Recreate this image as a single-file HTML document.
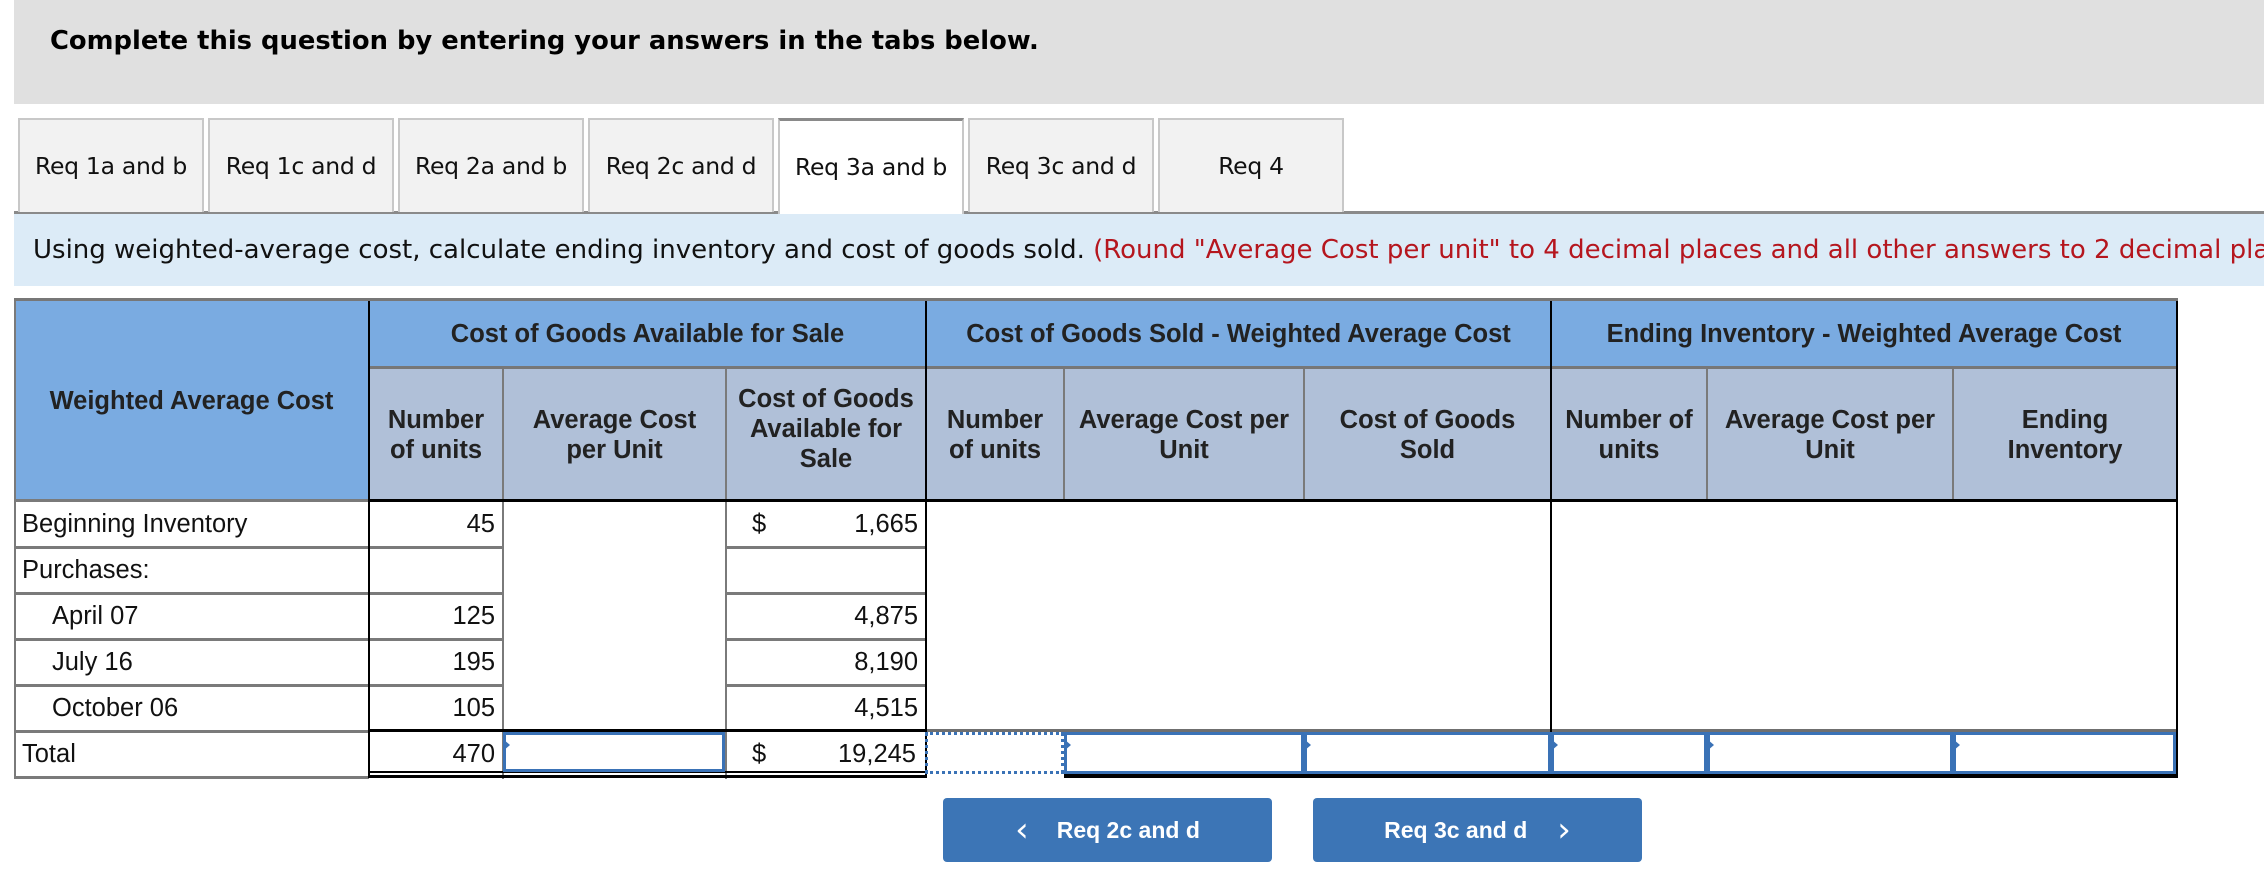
<!DOCTYPE html>
<html><head><meta charset="utf-8"><style>
*{margin:0;padding:0;box-sizing:border-box}
body{width:2264px;height:878px;background:#fff;position:relative;overflow:hidden;font-family:"Liberation Sans",Arial,sans-serif;color:#222}
.a{position:absolute}
.tab{position:absolute;top:118px;height:94px;width:186px;background:#f2f2f2;border:2px solid #c8c8c8;border-bottom:none;font-family:"DejaVu Sans",Verdana,sans-serif;font-size:23.5px;color:#111;display:flex;align-items:center;justify-content:center;white-space:nowrap;letter-spacing:-0.3px}
.hd{position:absolute;background:#b0c0d8;font-weight:bold;font-size:25.5px;color:#222;display:flex;align-items:center;justify-content:center;text-align:center;line-height:30px;white-space:nowrap}
.h1{position:absolute;background:#7aabe1;font-weight:bold;font-size:25.5px;color:#222;display:flex;align-items:center;justify-content:center;text-align:center;white-space:nowrap}
.vl{position:absolute;width:2px;background:#7a7a7a}
.vb{position:absolute;width:2px;background:#000}
.hl{position:absolute;height:3px;background:#7a7a7a}
.t{position:absolute;font-size:25.5px;line-height:46px;color:#111;white-space:nowrap}
.r{text-align:right}
.inp{position:absolute;border:3px solid #3a72b6;background:#fff}
.inp:before{content:"";position:absolute;left:-3px;top:4px;border-left:7px solid #3a72b6;border-top:6px solid transparent;border-bottom:6px solid transparent}
.btn{position:absolute;top:798px;height:64px;background:#3c75b6;border-radius:4px;color:#fff;font-weight:bold;font-size:23px;display:flex;align-items:center;justify-content:center}
.ch{font-weight:normal;font-size:34px;font-family:"DejaVu Sans",sans-serif;line-height:30px}
</style></head><body>
<div class="a" style="left:14px;top:0;width:2250px;height:104px;background:#e0e0e0"></div>
<div class="a" style="left:50px;top:26px;font-family:'DejaVu Sans',Verdana,sans-serif;font-weight:bold;font-size:25.8px;color:#000;white-space:nowrap">Complete this question by entering your answers in the tabs below.</div>

<div class="a" style="left:14px;top:211px;width:2250px;height:3px;background:#8a8a8a"></div>
<div class="tab" style="left:18px">Req 1a and b</div>
<div class="tab" style="left:208px">Req 1c and d</div>
<div class="tab" style="left:398px">Req 2a and b</div>
<div class="tab" style="left:588px">Req 2c and d</div>
<div class="tab" style="left:778px;background:#fff;border-top:3px solid #8a8a8a;height:97px;padding-bottom:3px">Req 3a and b</div>
<div class="tab" style="left:968px">Req 3c and d</div>
<div class="tab" style="left:1158px">Req 4</div>

<div class="a" style="left:14px;top:214px;width:2250px;height:72px;background:#dcebf7"></div>
<div class="a" style="left:33px;top:235px;font-family:'DejaVu Sans',Verdana,sans-serif;font-size:26px;white-space:nowrap;color:#111">Using weighted-average cost, calculate ending inventory and cost of goods sold. <span style="color:#b5161e">(Round "Average Cost per unit" to 4 decimal places and all other answers to 2 decimal places.)</span></div>

<!-- header -->
<div class="a" style="left:14px;top:298px;width:2164px;height:3px;background:#777"></div>
<div class="h1" style="left:14px;top:301px;width:355px;height:200px">Weighted Average Cost</div>
<div class="h1" style="left:369px;top:301px;width:557px;height:66px">Cost of Goods Available for Sale</div>
<div class="h1" style="left:926px;top:301px;width:625px;height:66px">Cost of Goods Sold - Weighted Average Cost</div>
<div class="h1" style="left:1551px;top:301px;width:626px;height:66px">Ending Inventory - Weighted Average Cost</div>
<div class="a" style="left:369px;top:366px;width:1808px;height:3px;background:#777"></div>
<div class="hd" style="left:369px;top:369px;width:134px;height:131px">Number<br>of units</div>
<div class="hd" style="left:503px;top:369px;width:223px;height:131px">Average Cost<br>per Unit</div>
<div class="hd" style="left:726px;top:369px;width:200px;height:131px;padding-bottom:12px">Cost of Goods<br>Available for<br>Sale</div>
<div class="hd" style="left:926px;top:369px;width:138px;height:131px">Number<br>of units</div>
<div class="hd" style="left:1064px;top:369px;width:240px;height:131px">Average Cost per<br>Unit</div>
<div class="hd" style="left:1304px;top:369px;width:247px;height:131px">Cost of Goods<br>Sold</div>
<div class="hd" style="left:1551px;top:369px;width:156px;height:131px">Number of<br>units</div>
<div class="hd" style="left:1707px;top:369px;width:246px;height:131px">Average Cost per<br>Unit</div>
<div class="hd" style="left:1953px;top:369px;width:224px;height:131px">Ending<br>Inventory</div>
<div class="vl" style="left:502px;top:369px;height:410px"></div>
<div class="vl" style="left:725px;top:369px;height:410px"></div>
<div class="vl" style="left:1063px;top:369px;height:132px"></div>
<div class="vl" style="left:1303px;top:369px;height:132px"></div>
<div class="vl" style="left:1706px;top:369px;height:132px"></div>
<div class="vl" style="left:1952px;top:369px;height:132px"></div>
<div class="a" style="left:369px;top:499px;width:1808px;height:3px;background:#000"></div>
<div class="a" style="left:14px;top:499px;width:355px;height:3px;background:#7a7a7a"></div>

<!-- body lines -->
<div class="vl" style="left:14px;top:301px;height:477px"></div>
<div class="hl" style="left:14px;top:546px;width:355px"></div>
<div class="hl" style="left:14px;top:592px;width:355px"></div>
<div class="hl" style="left:14px;top:638px;width:355px"></div>
<div class="hl" style="left:14px;top:684px;width:355px"></div>
<div class="hl" style="left:14px;top:730px;width:355px"></div>
<div class="hl" style="left:14px;top:776px;width:355px"></div>
<div class="hl" style="left:369px;top:546px;width:134px"></div>
<div class="hl" style="left:369px;top:592px;width:134px"></div>
<div class="hl" style="left:369px;top:638px;width:134px"></div>
<div class="hl" style="left:369px;top:684px;width:134px"></div>
<div class="hl" style="left:726px;top:546px;width:200px"></div>
<div class="hl" style="left:726px;top:592px;width:200px"></div>
<div class="hl" style="left:726px;top:638px;width:200px"></div>
<div class="hl" style="left:726px;top:684px;width:200px"></div>
<div class="a" style="left:369px;top:729px;width:1808px;height:3px;background:#000"></div>
<div class="a" style="left:926px;top:729px;width:1251px;height:3px;background:#6f6f6f"></div>
<div class="vb" style="left:368px;top:301px;height:477px"></div>
<div class="vb" style="left:925px;top:301px;height:477px;width:2px"></div>
<div class="vb" style="left:1550px;top:301px;height:477px"></div>
<div class="vb" style="left:2176px;top:301px;height:477px"></div>
<div class="a" style="left:369px;top:771px;width:557px;height:2px;background:#000"></div>
<div class="a" style="left:369px;top:775px;width:557px;height:3px;background:#000"></div>
<div class="a" style="left:1064px;top:774px;width:1113px;height:4px;background:#000"></div>

<div class="t" style="left:22px;top:501px">Beginning Inventory</div>
<div class="t" style="left:22px;top:547px">Purchases:</div>
<div class="t" style="left:52px;top:593px">April 07</div>
<div class="t" style="left:52px;top:639px">July 16</div>
<div class="t" style="left:52px;top:685px">October 06</div>
<div class="t" style="left:22px;top:731px">Total</div>
<div class="t r" style="left:369px;width:126px;top:501px">45</div>
<div class="t r" style="left:369px;width:126px;top:593px">125</div>
<div class="t r" style="left:369px;width:126px;top:639px">195</div>
<div class="t r" style="left:369px;width:126px;top:685px">105</div>
<div class="t r" style="left:369px;width:126px;top:731px">470</div>
<div class="t" style="left:752px;top:501px">$</div>
<div class="t" style="left:752px;top:731px">$</div>
<div class="t r" style="left:726px;width:192px;top:501px">1,665</div>
<div class="t r" style="left:726px;width:192px;top:593px">4,875</div>
<div class="t r" style="left:726px;width:192px;top:639px">8,190</div>
<div class="t r" style="left:726px;width:192px;top:685px">4,515</div>
<div class="t r" style="left:726px;width:190px;top:731px">19,245</div>

<div class="inp" style="left:503px;top:732px;width:222px;height:40px"></div>
<div class="a" style="left:925px;top:732px;width:139px;height:42px;border:3px dotted #3a72b6"></div>
<div class="inp" style="left:1064px;top:732px;width:240px;height:42px"></div>
<div class="inp" style="left:1304px;top:732px;width:247px;height:42px"></div>
<div class="inp" style="left:1551px;top:732px;width:156px;height:42px"></div>
<div class="inp" style="left:1707px;top:732px;width:246px;height:42px"></div>
<div class="inp" style="left:1953px;top:732px;width:223px;height:42px"></div>

<div class="btn" style="left:943px;width:329px"><span class="ch" style="margin-right:28px">&#x2039;</span>Req 2c and d</div>
<div class="btn" style="left:1313px;width:329px">Req 3c and d<span class="ch" style="margin-left:30px">&#x203A;</span></div>
</body></html>
